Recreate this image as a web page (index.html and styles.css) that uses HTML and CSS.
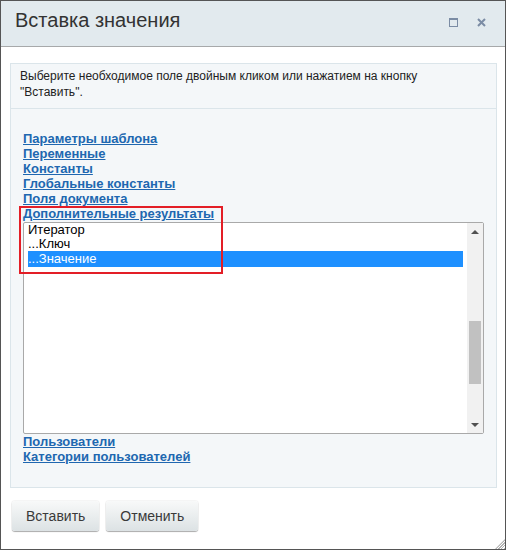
FILE: index.html
```html
<!DOCTYPE html>
<html lang="ru">
<head>
    <meta charset="UTF-8">
    <meta name="viewport" content="width=device-width, initial-scale=1.0">
    <title>Вставка значения</title>
    <link rel="stylesheet" href="styles.css">
</head>
<body>
    <div class="dialog">
        <div class="dialog-head">
            <div class="dialog-title">Вставка значения</div>
            <span class="btn-max"></span>
            <svg class="btn-close" width="9" height="9" viewBox="0 0 9 9">
                <path d="M1 1L8 8M8 1L1 8" stroke="#7b8ca4" stroke-width="2" fill="none"/>
            </svg>
        </div>

        <div class="panel">
            <div class="hint">
                Выберите необходимое поле двойным кликом или нажатием на кнопку<br>
                "Вставить".
            </div>
            <div class="groups">
                <a href="#">Параметры шаблона</a>
                <a href="#">Переменные</a>
                <a href="#">Константы</a>
                <a href="#">Глобальные константы</a>
                <a href="#">Поля документа</a>
                <a href="#">Дополнительные результаты</a>
            </div>
            <div class="listbox">
                <div class="options">
                    <div class="option">Итератор</div>
                    <div class="option">...Ключ</div>
                    <div class="option selected">...Значение</div>
                </div>
                <div class="scrollbar">
                    <div class="arrow"><span class="tri-up"></span></div>
                    <div class="track"><div class="thumb"></div></div>
                    <div class="arrow"><span class="tri-down"></span></div>
                </div>
            </div>
            <div class="groups after">
                <a href="#">Пользователи</a>
                <a href="#">Категории пользователей</a>
            </div>
        </div>

        <div class="actions">
            <button>Вставить</button>
            <button>Отменить</button>
        </div>

        <div class="highlight"></div>
        <div class="grip"></div>
    </div>
</body>
</html>
```

FILE: styles.css
```css
body {
    margin: 0;
    background: #fff;
    font-family: "Liberation Sans", Arial, sans-serif;
}
.dialog {
    position: relative;
    width: 506px;
    height: 550px;
    box-sizing: border-box;
    border: 1px solid #555;
    background: #fff;
}
.dialog-head {
    display: flex;
    align-items: flex-start;
    height: 45px;
    background: #e2eaee;
    border-bottom: 1px solid #a7a9aa;
    padding-left: 14px;
}
.dialog-title {
    flex: 1;
    font-size: 20px;
    line-height: 38px;
    color: #333;
}
.btn-max {
    width: 7px;
    height: 6px;
    margin-top: 17px;
    border: 1px solid #7b8ca4;
    border-top-width: 2px;
}
.btn-close {
    margin: 17px 19px 0 19px;
}
.panel {
    margin: 16px 8px 0 9px;
    background: #f4f7f9;
    border: 1px solid #dbe5ea;
    padding-bottom: 23px;
}
.hint {
    font-size: 12px;
    line-height: 16px;
    color: #222;
    padding: 4px 9px 8px;
    border-bottom: 1px solid #dbe5ea;
}
.groups {
    margin-top: 22px;
    padding-left: 12px;
}
.groups.after {
    margin-top: 0;
}
.groups a {
    display: block;
    width: max-content;
    font-size: 13px;
    font-weight: bold;
    line-height: 15px;
    color: #2067b0;
}
.listbox {
    display: flex;
    width: 461px;
    height: 212px;
    box-sizing: border-box;
    margin: 1px 0 0 12px;
    border: 1px solid #a9a9a9;
    border-radius: 2px;
    background: #fff;
}
.options {
    flex: 1;
    padding: 0 4px;
}
.option {
    font-size: 13px;
    line-height: 14px;
    color: #000;
}
.option.selected {
    background: #1e90ff;
    color: #fff;
    line-height: 16px;
}
.scrollbar {
    display: flex;
    flex-direction: column;
    width: 16px;
    background: #f1f1f1;
}
.arrow {
    height: 17px;
    display: flex;
    align-items: center;
    justify-content: center;
}
.tri-up {
    border-left: 4px solid transparent;
    border-right: 4px solid transparent;
    border-bottom: 4px solid #505050;
}
.tri-down {
    border-left: 4px solid transparent;
    border-right: 4px solid transparent;
    border-top: 4px solid #505050;
}
.track {
    flex: 1;
    padding: 0 2px;
}
.thumb {
    margin-top: 81px;
    height: 63px;
    background: #c1c1c1;
}
.actions {
    display: flex;
    gap: 7px;
    margin: 13px 0 0 11px;
}
button {
    height: 30px;
    padding: 0 14px;
    font-family: "Liberation Sans", Arial, sans-serif;
    font-size: 14px;
    color: #3a3a3a;
    border: none;
    border-radius: 3px;
    background: linear-gradient(#f8f9f9, #dce2e4);
    box-shadow: 0 1px 1px rgba(0, 0, 0, 0.3), 0 0 0 1px rgba(0, 0, 0, 0.04);
    cursor: pointer;
}
.highlight {
    position: absolute;
    left: 18px;
    top: 205px;
    width: 200px;
    height: 64px;
    border: 2px solid #e31e26;
}
.grip {
    position: absolute;
    right: 0;
    bottom: 0;
    width: 10px;
    height: 10px;
    background: repeating-linear-gradient(135deg, transparent 0 1px, #b4b4b4 1px 2px);
    clip-path: polygon(100% 0, 100% 100%, 0 100%);
}
```
